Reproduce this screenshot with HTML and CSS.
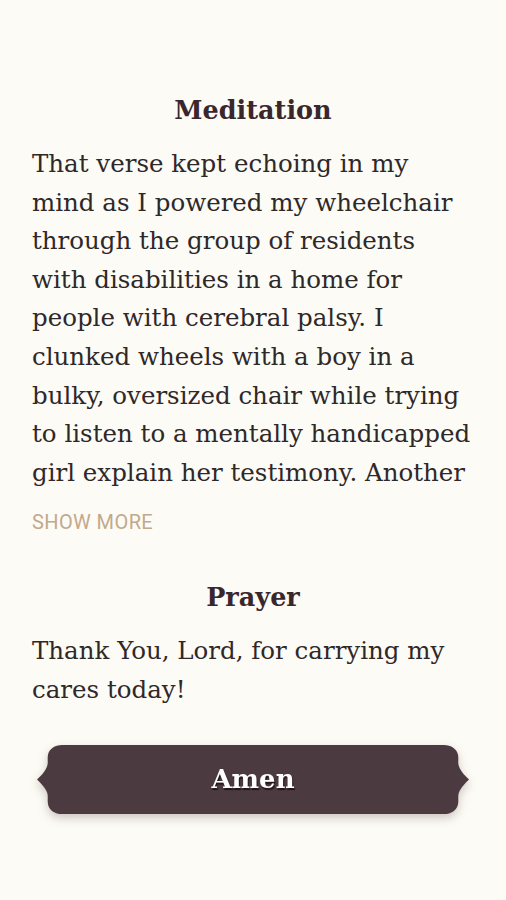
FILE: index.html
```html
<!DOCTYPE html>
<html lang="en">
<head>
<meta charset="utf-8">
<title>Meditation</title>
<link rel="stylesheet" href="styles.css">
</head>
<body>
<main class="page">
  <section class="section">
    <h2 class="heading">Meditation</h2>
    <p class="body clamp">That verse kept echoing in my<br>mind as I powered my wheelchair<br>through the group of residents<br>with disabilities in a home for<br>people with cerebral palsy. I<br>clunked wheels with a boy in a<br>bulky, oversized chair while trying<br>to listen to a mentally handicapped<br>girl explain her testimony. Another</p>
    <button class="more" type="button">SHOW MORE</button>
  </section>
  <section class="section prayer">
    <h2 class="heading">Prayer</h2>
    <p class="body">Thank You, Lord, for carrying my<br>cares today!</p>
  </section>
  <div class="action">
    <button class="amen" type="button">
      <svg class="amen-shape" viewBox="0 0 432 70" preserveAspectRatio="none" aria-hidden="true">
        <path d="M25 0 H407 C414 0 420 4 421 10 C422 15 420 19 423 24 C425 28 428 31 432 35 C428 39 425 42 423 46 C420 51 422 55 421 60 C420 66 414 70 407 70 H25 C18 70 12 66 11 60 C10 55 12 51 9 46 C7 42 4 39 0 35 C4 31 7 28 9 24 C12 19 10 15 11 10 C12 4 18 0 25 0 Z" fill="#4b3a3f"/>
      </svg>
      <span class="amen-label">Amen</span>
    </button>
  </div>
</main>
</body>
</html>
```
FILE: styles.css
```css
html, body {
  margin: 0;
  padding: 0;
  background: #fdfbf5;
}
.page {
  width: 506px;
  height: 900px;
  box-sizing: border-box;
  padding: 92px 32px 0 32px;
  display: flex;
  flex-direction: column;
  font-family: "DejaVu Serif", "Liberation Serif", serif;
}
.section {
  display: flex;
  flex-direction: column;
}
.heading {
  margin: 0;
  text-align: center;
  font-size: 25.5px;
  font-weight: bold;
  line-height: 36px;
  color: #3a272d;
}
.body {
  margin: 17px 0 0 0;
  font-size: 24.5px;
  line-height: 38.6px;
  color: #2f2829;
  white-space: nowrap;
}
.more {
  align-self: flex-start;
  margin: 20px 0 0 0;
  padding: 0;
  border: 0;
  background: none;
  font-family: Roboto, "Liberation Sans", sans-serif;
  font-size: 20px;
  line-height: 20px;
  letter-spacing: 0.4px;
  color: #c3a98c;
}
.prayer {
  margin-top: 47px;
}
.action {
  margin-top: 35px;
  display: flex;
  justify-content: center;
}
.amen {
  position: relative;
  width: 432px;
  height: 69px;
  padding: 0;
  border: 0;
  background: none;
  display: flex;
  align-items: center;
  justify-content: center;
  filter: drop-shadow(0 4px 5px rgba(60, 40, 40, 0.25));
}
.amen-shape {
  position: absolute;
  inset: 0;
  width: 100%;
  height: 100%;
}
.amen-label {
  position: relative;
  font-family: "DejaVu Serif", "Liberation Serif", serif;
  font-weight: bold;
  font-size: 26px;
  color: #ffffff;
  text-shadow: 1px 2px 1px #1f1517;
}
```
